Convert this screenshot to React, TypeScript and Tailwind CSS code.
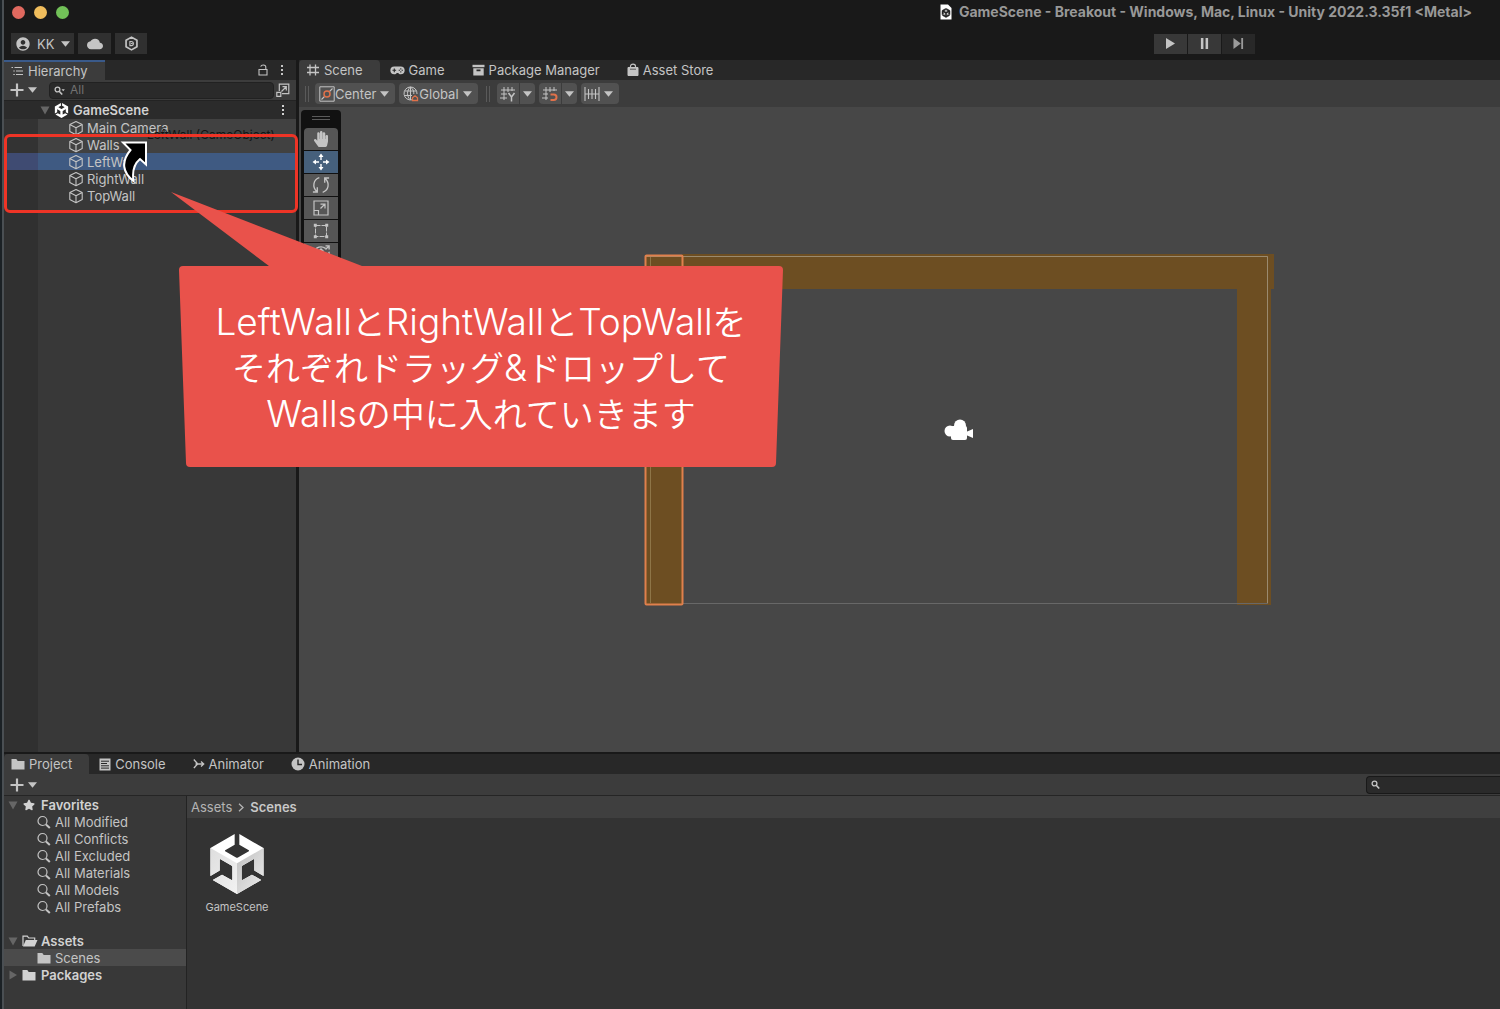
import type { ReactNode } from 'react';
import { FaHandPaper, FaStar } from 'react-icons/fa';
import { MdAccountCircle, MdCloud } from 'react-icons/md';

const UNITY_PATH =
  'm12.9288 4.2939 3.7997 2.1929c.1366.077.1415.2905 0 .3675l-4.515 2.6076a.4192.4192 0 0 1-.4246 0L7.274 6.8543c-.139-.0745-.1415-.293 0-.3675l3.7972-2.193V0L1.3758 5.5977V16.793l3.7177-2.1456v-4.3858c-.0025-.1565.1813-.2682.318-.1838l4.5148 2.6076a.4252.4252 0 0 1 .2136.3676v5.2127c.0025.1565-.1813.2682-.3179.1838l-3.7996-2.1929-3.7178 2.1457L12 24l9.6954-5.5977-3.7178-2.1457-3.7996 2.1929c-.1341.082-.3229-.0248-.3179-.1838V13.053c0-.1565.087-.2956.2136-.3676l4.5149-2.6076c.134-.082.3228.0224.3179.1838v4.3858l3.7177 2.1456V5.5977L12.9288 0Z';

const Svg = ({ box = '0 0 16 16', className = 'size-4', children }: { box?: string; className?: string; children: ReactNode }) => (
  <svg viewBox={box} className={`shrink-0 ${className}`} fill="none" stroke="currentColor" strokeWidth="1.4" aria-hidden="true">
    {children}
  </svg>
);

const Caret = () => (
  <Svg box="0 0 10 6" className="w-[9px] h-[6px]">
    <path d="M0 0h10L5 6z" fill="currentColor" stroke="none" />
  </Svg>
);

const Plus = () => (
  <Svg box="0 0 14 14" className="size-[14px]">
    <path d="M7 .5v13M.5 7h13" strokeWidth="2.200" />
  </Svg>
);

const Dots = () => (
  <Svg box="0 0 4 12" className="w-1 h-3">
    <path d="M1 1h2v2H1zM1 5h2v2H1zM1 9h2v2H1z" fill="currentColor" stroke="none" />
  </Svg>
);

const Fold = ({ open = true }: { open?: boolean }) => (
  <Svg box="0 0 10 10" className="size-[10px] text-[#666666]">
    <path d={open ? 'M.5 1.500h9L5 9.500z' : 'M1.500 .5v9L9 5z'} fill="currentColor" stroke="none" />
  </Svg>
);

const Cube = () => (
  <Svg className="size-4">
    <path d="M8 1.500 14.200 4.600v7L8 14.800 1.800 11.600v-7zM1.800 4.600 8 7.800l6.200-3.200M8 7.800v7" strokeWidth="1.100" strokeLinejoin="round" />
  </Svg>
);

const Unity = () => (
  <Svg box="0 0 24 24" className="size-[15px] text-white">
    <path d={UNITY_PATH} fill="currentColor" stroke="none" />
  </Svg>
);

const UnityCube = () => (
  <svg viewBox="0 0 24 24" className="size-[60px]" aria-hidden="true">
    <defs>
      <clipPath id="unity-mark">
        <path d={UNITY_PATH} />
      </clipPath>
      <linearGradient id="unity-right" x1="0" y1="0" x2="1" y2="1">
        <stop offset="0" stopColor="#bdbdbd" />
        <stop offset="1" stopColor="#f0f0f0" />
      </linearGradient>
      <linearGradient id="unity-left" x1="0" y1="0" x2="1" y2="1">
        <stop offset="0" stopColor="#dcdcdc" />
        <stop offset="1" stopColor="#f2f2f2" />
      </linearGradient>
    </defs>
    <g clipPath="url(#unity-mark)">
      <path d="M0 0h24v24H0z" fill="#ffffff" />
      <path d="M0 4.800 12 11.700V24H0z" fill="url(#unity-left)" />
      <path d="M24 4.800 12 11.700V24h12z" fill="url(#unity-right)" />
    </g>
  </svg>
);

const Folder = () => (
  <Svg box="0 0 14 12" className="w-[14px] h-3">
    <path d="M.5 1h4.800l1.400 2h6.800v8.500H.5z" fill="currentColor" stroke="none" />
  </Svg>
);

const FolderOpen = () => (
  <Svg box="0 0 16 12" className="w-4 h-3">
    <path d="M1 11V1.200h4.300l1.400 1.800h6v2" strokeWidth="1.200" />
    <path d="M3.800 5H15.500L12.700 11.500H1z" fill="currentColor" stroke="none" />
  </Svg>
);

const Search = () => (
  <Svg box="0 0 14 14" className="size-[14px]">
    <circle cx="5.500" cy="6" r="4.500" strokeWidth="1.200" />
    <path d="m9 9.500 3.800 3.500" strokeWidth="2" />
  </Svg>
);

const SmallSearch = ({ caret = false }: { caret?: boolean }) => (
  <Svg box="0 0 11 9" className="w-[11px] h-[9px]">
    <circle cx="3.500" cy="3.500" r="2.400" strokeWidth="1.300" />
    <path d="m5.200 5.200 3 3.300" strokeWidth="1.600" />
    {caret && <path d="M7.500 3.300h3.400L9.200 5.200z" fill="currentColor" stroke="none" />}
  </Svg>
);

const GridIcon = () => (
  <Svg box="0 0 14 14" className="size-[14px]">
    <path d="M4 1.500v11M9.500 1.500v11M1 4.500h12M1 9.500h12" strokeWidth="1.300" />
  </Svg>
);

const GamepadIcon = () => (
  <Svg box="0 0 16 12" className="w-[15px] h-[11px]">
    <path d="M4.500 1.500h7a4.300 4.300 0 0 1 0 8.600c-1.300 0-2.200-.7-2.700-1.500H7.200c-.5.8-1.400 1.500-2.700 1.500a4.300 4.300 0 0 1 0-8.600z" fill="currentColor" stroke="none" />
    <path d="M4.500 3.800v4M2.500 5.800h4" stroke="#282828" strokeWidth="1.200" />
    <path d="M9.300 5.800h1.400M12.500 5.800h1.400M11.600 3.500v1.400M11.600 6.700v1.400" stroke="#282828" strokeWidth="1.200" />
  </Svg>
);

const PackageIcon = () => (
  <Svg box="0 0 13 12" className="w-[13px] h-3">
    <path d="M.5 .8h12v2.400H.5z" fill="currentColor" stroke="none" />
    <path d="M1.300 4.200h10.400v7.300H1.300zM4.500 5.500v1.700h4V5.500z" fill="currentColor" fillRule="evenodd" stroke="none" />
  </Svg>
);

const BagIcon = () => (
  <Svg box="0 0 12 14" className="w-3 h-[14px]">
    <path d="M1 4.500h10v8H1z" fill="currentColor" stroke="currentColor" strokeLinejoin="round" strokeWidth="1" />
    <path d="M3.500 5V3.300C3.500 1.900 4.500 1.200 6 1.200s2.500.7 2.500 2.100V5" strokeWidth="1.200" />
    <path d="M3 6.200h6" stroke="#282828" strokeWidth=".7" />
  </Svg>
);

const ConsoleIcon = () => (
  <Svg box="0 0 12 13" className="w-3 h-[13px]">
    <path d="M.5 .5h11v12H.5z" fill="currentColor" stroke="none" />
    <path d="M2 3.200h8M2 5.500h6M2 7.800h8M2 10.100h8" stroke="#282828" strokeWidth="1" />
  </Svg>
);

const AnimatorIcon = () => (
  <Svg box="0 0 12 12" className="size-3">
    <path d="M.8 1.500c1.500 1.500 2.500 3 4 4.500-1.500 1-2.500 2.500-4 4M2.500 6h8M8 3.500 10.700 6 8 8.500" strokeWidth="1.300" />
  </Svg>
);

const ClockIcon = () => (
  <Svg box="0 0 14 14" className="size-[14px]">
    <circle cx="7" cy="7" r="6.500" fill="currentColor" stroke="none" />
    <path d="M7 2.500V7.500H11" stroke="#282828" strokeWidth="1.400" />
  </Svg>
);

const ListIcon = () => (
  <Svg box="0 0 13 10" className="w-[13px] h-[10px]">
    <path d="M3.500 1.500H11M5 5h7M5 8.500h7" strokeWidth="1.100" />
    <path d="M.5 1.500h1.500M2.300 5h1.500M2.300 8.500h1.500" strokeWidth="1.200" />
  </Svg>
);

const LockIcon = () => (
  <Svg box="0 0 10 12" className="w-[10px] h-3">
    <path d="M1 5.500h8V11H1zM7.800 5.500V3.200C7.800 1.800 7 1 5.300 1 4 1 3 1.500 2.700 2.700" strokeWidth="1.100" />
  </Svg>
);

const PopOutIcon = () => (
  <Svg box="0 0 14 14" className="size-[14px]">
    <path d="M3.300 8V1.200h9.500v9.500H6M.8 9.300h4v4h-4zM5.500 8.500 10 4M6.500 3.700h3.800v3.800" strokeWidth="1.200" />
  </Svg>
);

const HexIcon = () => (
  <Svg className="size-[15px]">
    <path d="M8 1.200 13.800 4.600v6.800L8 14.800 2.200 11.400V4.600z" strokeWidth="1.800" strokeLinejoin="round" />
    <path d="M6.300 5.800h1.500a2.200 2.200 0 0 1 0 4.400H6.300zM7.500 8h1.500" strokeWidth="1.200" />
  </Svg>
);

const PivotIcon = () => (
  <Svg>
    <path d="M.8 .8h14.400v14.400H.8z" strokeWidth="1" />
    <path d="m2.500 13.500 3-3M10.500 5.500l3-3" strokeWidth="1.100" />
    <circle cx="8" cy="8" r="3" stroke="#e0714a" strokeWidth="1.500" />
  </Svg>
);

const GlobeIcon = () => (
  <Svg>
    <path d="M9 13.800A6.500 6.500 0 1 1 14 8M7.500 1c-4 3.500-4 9.500 0 13M7.500 1c2.800 2 3.500 4.500 3.300 7M1.500 5h12M1.200 9.500H9M7.500 1v13" strokeWidth="1" />
    <path d="M9.500 14.500v-2.700l2.500-2 2.500 2v2.700z" stroke="#e0714a" strokeWidth="1.300" />
  </Svg>
);

const GridAxisIcon = () => (
  <Svg>
    <path d="M4 1v13M8 1v5M12 1v4M1 4h14M1 8h6M0 12h7" strokeWidth="1" />
    <path d="m8.500 7 3 4 3-4M11.500 11v4.500" strokeWidth="1.500" />
  </Svg>
);

const GridSnapIcon = () => (
  <Svg>
    <path d="M4 1v13M8 1v5M12 1v4M1 4h14M1 8h5M0 12h6" strokeWidth="1" />
    <path d="M8.500 8.500h3.300a2.700 2.700 0 0 1 0 5.400H8.500" stroke="#e0714a" strokeWidth="2" />
  </Svg>
);

const RulerIcon = () => (
  <Svg>
    <path d="M1 1v14M15 1v14M4.500 3v10M8 3v10M11.500 3v10M1 8h14" strokeWidth="1.100" />
  </Svg>
);

const MoveIcon = () => (
  <Svg box="0 0 18 18" className="size-[18px]">
    <path d="M9 3v4M9 11v4M3 9h4M11 9h4" strokeWidth="1.400" />
    <path d="M9 .5 11.500 4h-5zM9 17.500 6.500 14h5zM.5 9 4 6.500v5zM17.500 9 14 11.500v-5z" fill="currentColor" stroke="none" />
  </Svg>
);

const RotateIcon = () => (
  <Svg className="size-[18px]">
    <path d="M6.500 1.500C1 3.300.2 9.500 4 13.500M9.500 14.500c5.500-1.800 6.300-8 2.500-12M.8 14.200h3.900V10M15.200 1.800h-3.900V6" strokeWidth="1.200" />
  </Svg>
);

const ScaleIcon = () => (
  <Svg>
    <path d="M1 1h14v14H1zM1 10.500h4.500V15M7.500 8.500 11.500 4.500M7.500 4.200H12v4.300" strokeWidth="1.200" />
  </Svg>
);

const RectIcon = () => (
  <Svg>
    <path d="M2.500 2.500h11v11h-11z" strokeWidth="1" strokeDasharray="5 1" />
    <path d="M.8 .8h3v3h-3zM12.200 .8h3v3h-3zM.8 12.200h3v3h-3zM12.200 12.200h3v3h-3z" fill="currentColor" stroke="none" />
  </Svg>
);

const TransformIcon = () => (
  <Svg className="size-[18px]">
    <path d="M1 6.500C3.500 1.500 8.500.5 12 3M15 6c1 4-1.500 8-6 9M12 4l3-3M12 .8h3.200V4M8 3.500V12M4 8h8M5.500 6 8 3.500 10.500 6" strokeWidth="1.200" />
  </Svg>
);

const SCENE_TABS = [
  { name: 'Scene', icon: <GridIcon /> },
  { name: 'Game', icon: <GamepadIcon /> },
  { name: 'Package Manager', icon: <PackageIcon /> },
  { name: 'Asset Store', icon: <BagIcon /> },
];

const PROJECT_TABS = [
  { name: 'Project', icon: <Folder /> },
  { name: 'Console', icon: <ConsoleIcon /> },
  { name: 'Animator', icon: <AnimatorIcon /> },
  { name: 'Animation', icon: <ClockIcon /> },
];

const OBJECTS = [
  { name: 'Main Camera', row: 'bg-[#414141]', gutter: 'bg-[#333333]' },
  { name: 'Walls', row: 'bg-[#414141]', gutter: 'bg-[#333333]' },
  { name: 'LeftWall', row: 'bg-[#3f5a82]', gutter: 'bg-[#3f4b72]' },
  { name: 'RightWall', row: '', gutter: '' },
  { name: 'TopWall', row: '', gutter: '' },
];

const FAVORITES = ['All Modified', 'All Conflicts', 'All Excluded', 'All Materials', 'All Models', 'All Prefabs'];

const TOOLS = [
  { name: 'Hand', icon: <FaHandPaper className="size-4" /> },
  { name: 'Move', icon: <MoveIcon /> },
  { name: 'Rotate', icon: <RotateIcon /> },
  { name: 'Scale', icon: <ScaleIcon /> },
  { name: 'Rect', icon: <RectIcon /> },
  { name: 'Transform', icon: <TransformIcon /> },
];

const Tabs = ({ tabs }: { tabs: { name: string; icon: ReactNode }[] }) => (
  <div className="flex h-5 bg-[#282828]">
    {tabs.map((tab, i) => (
      <button key={tab.name} className={`flex items-center gap-1 pr-[17px] ${i === 0 ? 'rounded-t-sm bg-[#3c3c3c] pl-[7px]' : 'pl-[10px]'}`}>
        {tab.icon}
        {tab.name}
      </button>
    ))}
  </div>
);

const TopBar = () => (
  <header className="bg-[#191919] pb-[6px]">
    <div className="flex h-6 items-center justify-between pr-7 pl-2">
      <div className="flex gap-[9px]">
        <button aria-label="Close" className="size-[13px] rounded-full bg-[#e0695f]" />
        <button aria-label="Minimize" className="size-[13px] rounded-full bg-[#f0bd5c]" />
        <button aria-label="Zoom" className="size-[13px] rounded-full bg-[#72c158]" />
      </div>
      <h1 className="flex items-center gap-[7px] text-sm font-bold text-[#989898]">
        <Svg box="0 0 12 16" className="w-3 h-4">
          <path d="M.5 .5h7.500l3.500 3.500v11.500H.5z" fill="#ffffff" stroke="none" />
          <g transform="translate(1.500 4.500) scale(.375)">
            <path d={UNITY_PATH} fill="#222222" stroke="#222222" />
          </g>
        </Svg>
        GameScene - Breakout - Windows, Mac, Linux - Unity 2022.3.35f1 &lt;Metal&gt;
      </h1>
    </div>
    <div className="flex items-center pt-[9px] pr-[245px] pl-[7px]">
      <div className="flex h-[21px] gap-1">
        <button className="flex items-center gap-[6px] bg-[#303030] px-1 text-[#c4c4c4]">
          <MdAccountCircle className="size-4" />
          <span className="pr-px">KK</span>
          <Caret />
        </button>
        <button aria-label="Cloud" className="flex w-[33px] items-center justify-center bg-[#303030]">
          <MdCloud className="size-4" />
        </button>
        <button aria-label="Version control" className="flex w-8 items-center justify-center bg-[#303030]">
          <HexIcon />
        </button>
      </div>
      <div className="ml-auto flex h-5 gap-px">
        <button aria-label="Play" className="flex w-[33px] items-center justify-center bg-[#383838]">
          <Svg box="0 0 10 12" className="w-[9px] h-[11px]">
            <path d="M0 0v12l10-6z" fill="currentColor" stroke="none" />
          </Svg>
        </button>
        <button aria-label="Pause" className="flex w-[33px] items-center justify-center bg-[#383838]">
          <Svg box="0 0 10 12" className="w-[9px] h-[11px]">
            <path d="M1 0h2.800v12H1zM6.200 0H9v12H6.200z" fill="currentColor" stroke="none" />
          </Svg>
        </button>
        <button aria-label="Step" className="flex w-[33px] items-center justify-center bg-[#282828] text-[#9a9a9a]">
          <Svg box="0 0 11 12" className="w-[11px] h-[11px]">
            <path d="M0 0v12l8-6zM8.500 0h2v12h-2z" fill="currentColor" stroke="none" />
          </Svg>
        </button>
      </div>
    </div>
  </header>
);

const Hierarchy = () => (
  <aside className="flex w-[292px] shrink-0 flex-col bg-[#383838]">
    <div className="flex h-5 items-center bg-[#282828] pr-3">
      <button className="flex h-5 items-center gap-1 border-t-2 border-[#3a5a8a] bg-[#3c3c3c] pr-[17px] pl-[7px]">
        <ListIcon />
        Hierarchy
      </button>
      <button aria-label="Lock" className="ml-auto">
        <LockIcon />
      </button>
      <button aria-label="Hierarchy options" className="ml-3">
        <Dots />
      </button>
    </div>
    <div className="flex h-[21px] items-center border-b border-[#232323] bg-[#3c3c3c] pr-[6px] pl-[6px]">
      <button aria-label="Create object" className="flex items-center gap-1">
        <Plus />
        <Caret />
      </button>
      <label className="ml-3 flex h-[17px] flex-1 items-center gap-[5px] rounded-sm border border-[#212121] bg-[#2a2a2a] pl-1">
        <SmallSearch caret />
        <input aria-label="Search hierarchy" placeholder="All" className="w-full min-w-0 bg-transparent text-xs outline-none placeholder:text-[#727272]" />
      </label>
      <button aria-label="Search in window" className="ml-[2px]">
        <PopOutIcon />
      </button>
    </div>
    <div className="flex h-[18px] shrink-0 items-center bg-[#2b2b2b] pr-[11px] pl-9 font-semibold text-[#d2d2d2]">
      <Fold />
      <span className="ml-1 flex items-center gap-1">
        <Unity />
        GameScene
      </span>
      <button aria-label="Scene options" className="ml-auto">
        <Dots />
      </button>
    </div>
    <ul className="flex-1 bg-linear-to-r from-[#303030] from-[34px] to-[#383838] to-[34px]">
      {OBJECTS.map((item) => (
        <li key={item.name} className={`flex h-[17px] ${item.row}`}>
          <span className={`w-[34px] ${item.gutter}`} />
          <button className="flex flex-1 items-center gap-[3px] pl-[30px]">
            <Cube />
            {item.name}
          </button>
        </li>
      ))}
    </ul>
  </aside>
);

const Arena = () => (
  <svg viewBox="0 0 640 360" className="absolute top-36 left-[341px] w-[640px]" aria-label="Walls in the scene">
    <path d="M42 3h592v35h-37H42zM597 38h34v316h-34zM6 5h36v348H6z" fill="#6d4e22" />
    <path d="M5.500 352V5.500h622V352" fill="none" stroke="#b9b2a4" strokeOpacity=".6" />
    <path d="M42 352.500h586" stroke="#686868" />
    <path d="M10.500 6v346" stroke="#a59061" strokeOpacity=".6" />
    <rect x="5.500" y="4.500" width="37" height="349" rx="1" fill="none" stroke="#e0804c" strokeWidth="2" />
    <g fill="#ffffff">
      <circle cx="320" cy="174.500" r="6" />
      <circle cx="310" cy="180" r="5.500" />
      <rect x="311" y="175" width="16" height="14" rx="2" />
      <path d="M326 181l7-3v9l-7-3z" />
    </g>
  </svg>
);

const ToolbarButton = ({ label, children }: { label: string; children: ReactNode }) => (
  <button aria-label={label} className="flex h-[21px] items-center bg-[#515151] px-[3px]">
    {children}
  </button>
);

const Grip = () => <span className="h-4 w-1 border-x border-[#5a5a5a]" />;

const SceneView = () => (
  <main className="flex min-w-0 flex-1 flex-col bg-[#474747]">
    <Tabs tabs={SCENE_TABS} />
    <div className="flex h-[27px] items-center bg-[#3c3c3c] pl-[6px]">
      <Grip />
      <div className="ml-[6px] flex gap-1">
        <button className="flex h-[21px] items-center rounded-sm bg-[#515151] pr-[6px] pl-1">
          <PivotIcon />
          <span className="mr-1">Center</span>
          <Caret />
        </button>
        <button className="flex h-[21px] items-center rounded-sm bg-[#515151] pr-[6px] pl-1">
          <GlobeIcon />
          <span className="mr-1">Global</span>
          <Caret />
        </button>
      </div>
      <span className="ml-2 flex">
        <Grip />
      </span>
      <div className="ml-[7px] flex gap-1">
        <div className="flex gap-px overflow-hidden rounded-sm">
          <ToolbarButton label="Grid visibility">
            <GridAxisIcon />
          </ToolbarButton>
          <ToolbarButton label="Grid options">
            <Caret />
          </ToolbarButton>
        </div>
        <div className="flex gap-px overflow-hidden rounded-sm">
          <ToolbarButton label="Grid snapping">
            <GridSnapIcon />
          </ToolbarButton>
          <ToolbarButton label="Snapping options">
            <Caret />
          </ToolbarButton>
        </div>
        <button aria-label="Snap increment" className="flex h-[21px] items-center gap-1 rounded-sm bg-[#515151] pr-[6px] pl-[3px]">
          <RulerIcon />
          <Caret />
        </button>
      </div>
    </div>
    <div className="relative min-h-[520px] flex-1 overflow-hidden">
      <div className="absolute top-[3px] left-[2px] flex w-10 flex-col rounded-sm bg-[#111111] px-[3px] pb-1">
        <span className="mx-auto mt-[6px] mb-2 h-1 w-[18px] border-y border-[#5a5a5a]" />
        <div className="flex flex-col gap-px overflow-hidden rounded-sm">
          {TOOLS.map((tool) => (
            <button
              key={tool.name}
              aria-label={`${tool.name} tool`}
              className={`flex h-[22px] items-center justify-center ${tool.name === 'Move' ? 'bg-[#46607c] text-white' : 'bg-[#565656]'}`}
            >
              {tool.icon}
            </button>
          ))}
        </div>
      </div>
      <Arena />
    </div>
  </main>
);

const Project = () => (
  <section className="flex min-h-64 flex-col border-t border-[#191919] bg-[#383838]">
    <Tabs tabs={PROJECT_TABS} />
    <div className="flex h-[22px] items-center justify-between border-b border-[#252525] bg-[#3c3c3c] pl-[6px]">
      <button aria-label="Create asset" className="flex items-center gap-1">
        <Plus />
        <Caret />
      </button>
      <label className="flex h-[18px] w-[134px] items-center rounded-l-sm border border-r-0 border-[#191919] bg-[#2a2a2a] pl-1">
        <SmallSearch />
        <input aria-label="Search assets" className="w-full min-w-0 bg-transparent text-xs outline-none" />
      </label>
    </div>
    <div className="flex flex-1">
      <nav className="w-[183px] border-r border-[#232323]">
        <div className="flex h-[17px] items-center pl-1 font-semibold text-[#d2d2d2]">
          <Fold />
          <FaStar className="mr-[6px] ml-[5px] size-3" />
          Favorites
        </div>
        <ul className="mb-[17px]">
          {FAVORITES.map((name) => (
            <li key={name} className="h-[17px]">
              <button className="flex h-full w-full items-center gap-1 pl-[33px]">
                <Search />
                {name}
              </button>
            </li>
          ))}
        </ul>
        <div className="flex h-[17px] items-center pl-1 font-semibold text-[#d2d2d2]">
          <Fold />
          <span className="ml-1 flex items-center gap-[3px]">
            <FolderOpen />
            Assets
          </span>
        </div>
        <button className="flex h-[17px] w-full items-center gap-1 bg-[#4b4b4b] pl-[33px]">
          <Folder />
          Scenes
        </button>
        <div className="flex h-[17px] items-center pl-1 font-semibold text-[#d2d2d2]">
          <Fold open={false} />
          <span className="ml-1 flex items-center gap-[5px]">
            <Folder />
            Packages
          </span>
        </div>
      </nav>
      <div className="flex-1 bg-[#333333]">
        <div className="flex h-[22px] items-center gap-[6px] bg-[#3f3f3f] pl-1 text-[#b4b4b4]">
          Assets
          <Svg box="0 0 6 9" className="w-[6px] h-[9px]">
            <path d="m1 .8 4 3.700-4 3.700" strokeWidth="1.300" />
          </Svg>
          <span className="font-semibold text-[#c8c8c8]">Scenes</span>
        </div>
        <button className="mt-4 ml-[15px] flex w-[70px] flex-col items-center gap-[5px] text-[11px]">
          <UnityCube />
          GameScene
        </button>
      </div>
    </div>
  </section>
);

const Latin = ({ children }: { children: ReactNode }) => <span className="text-[37px]">{children}</span>;

const DragOverlay = () => (
  <div className="pointer-events-none">
    <span className="absolute top-[127px] left-[143px] text-xs leading-4 text-[#141414]">LeftWall (GameObject)</span>
    <div className="absolute top-[134px] left-0 h-[79px] w-[294px] rounded-md border-[3px] border-[#ee3426]" />
    <svg viewBox="0 0 28 44" className="absolute top-[139px] left-[116px] h-11 w-7" aria-hidden="true">
      <path d="M3 3.500h23v22l-6-5.500c-6 5-8 12-6.500 22C3 34 .5 23 10.500 11z" fill="#000000" stroke="#ffffff" strokeWidth="2" strokeLinejoin="miter" />
    </svg>
    <div className="absolute top-48 left-[167px] w-[612px]">
      <svg viewBox="0 0 612 276" className="w-full" aria-hidden="true">
        <path d="M0 0 191 74H608q4 0 4 4l-7 193q0 4-4 4H19q-4 0-4-4L8 78q0-4 4-4H98z" fill="#e9524b" />
      </svg>
      <p className="absolute inset-x-0 top-[107px] pl-2 text-center font-['Inter','Noto_Sans_CJK_JP',sans-serif] text-[34px] leading-[45px] font-[350] whitespace-nowrap text-white">
        <Latin>LeftWall</Latin>と<Latin>RightWall</Latin>と<Latin>TopWall</Latin>を
        <br />
        それぞれドラッグ<Latin>&amp;</Latin>ドロップして
        <br />
        <Latin>Walls</Latin>の中に入れていきます
      </p>
    </div>
  </div>
);

const App = () => {
  return (
    <div className="bg-[#1b2125] pl-[2px]">
      <div className="relative flex min-h-screen flex-col border-l-2 border-[#4a4f53] bg-[#191919] font-['Inter',sans-serif] text-[13px] leading-4 text-[#c4c4c4]">
        <TopBar />
        <div className="flex flex-1 gap-[3px] pb-px">
          <Hierarchy />
          <SceneView />
        </div>
        <Project />
        <DragOverlay />
      </div>
    </div>
  );
};

export default App;
